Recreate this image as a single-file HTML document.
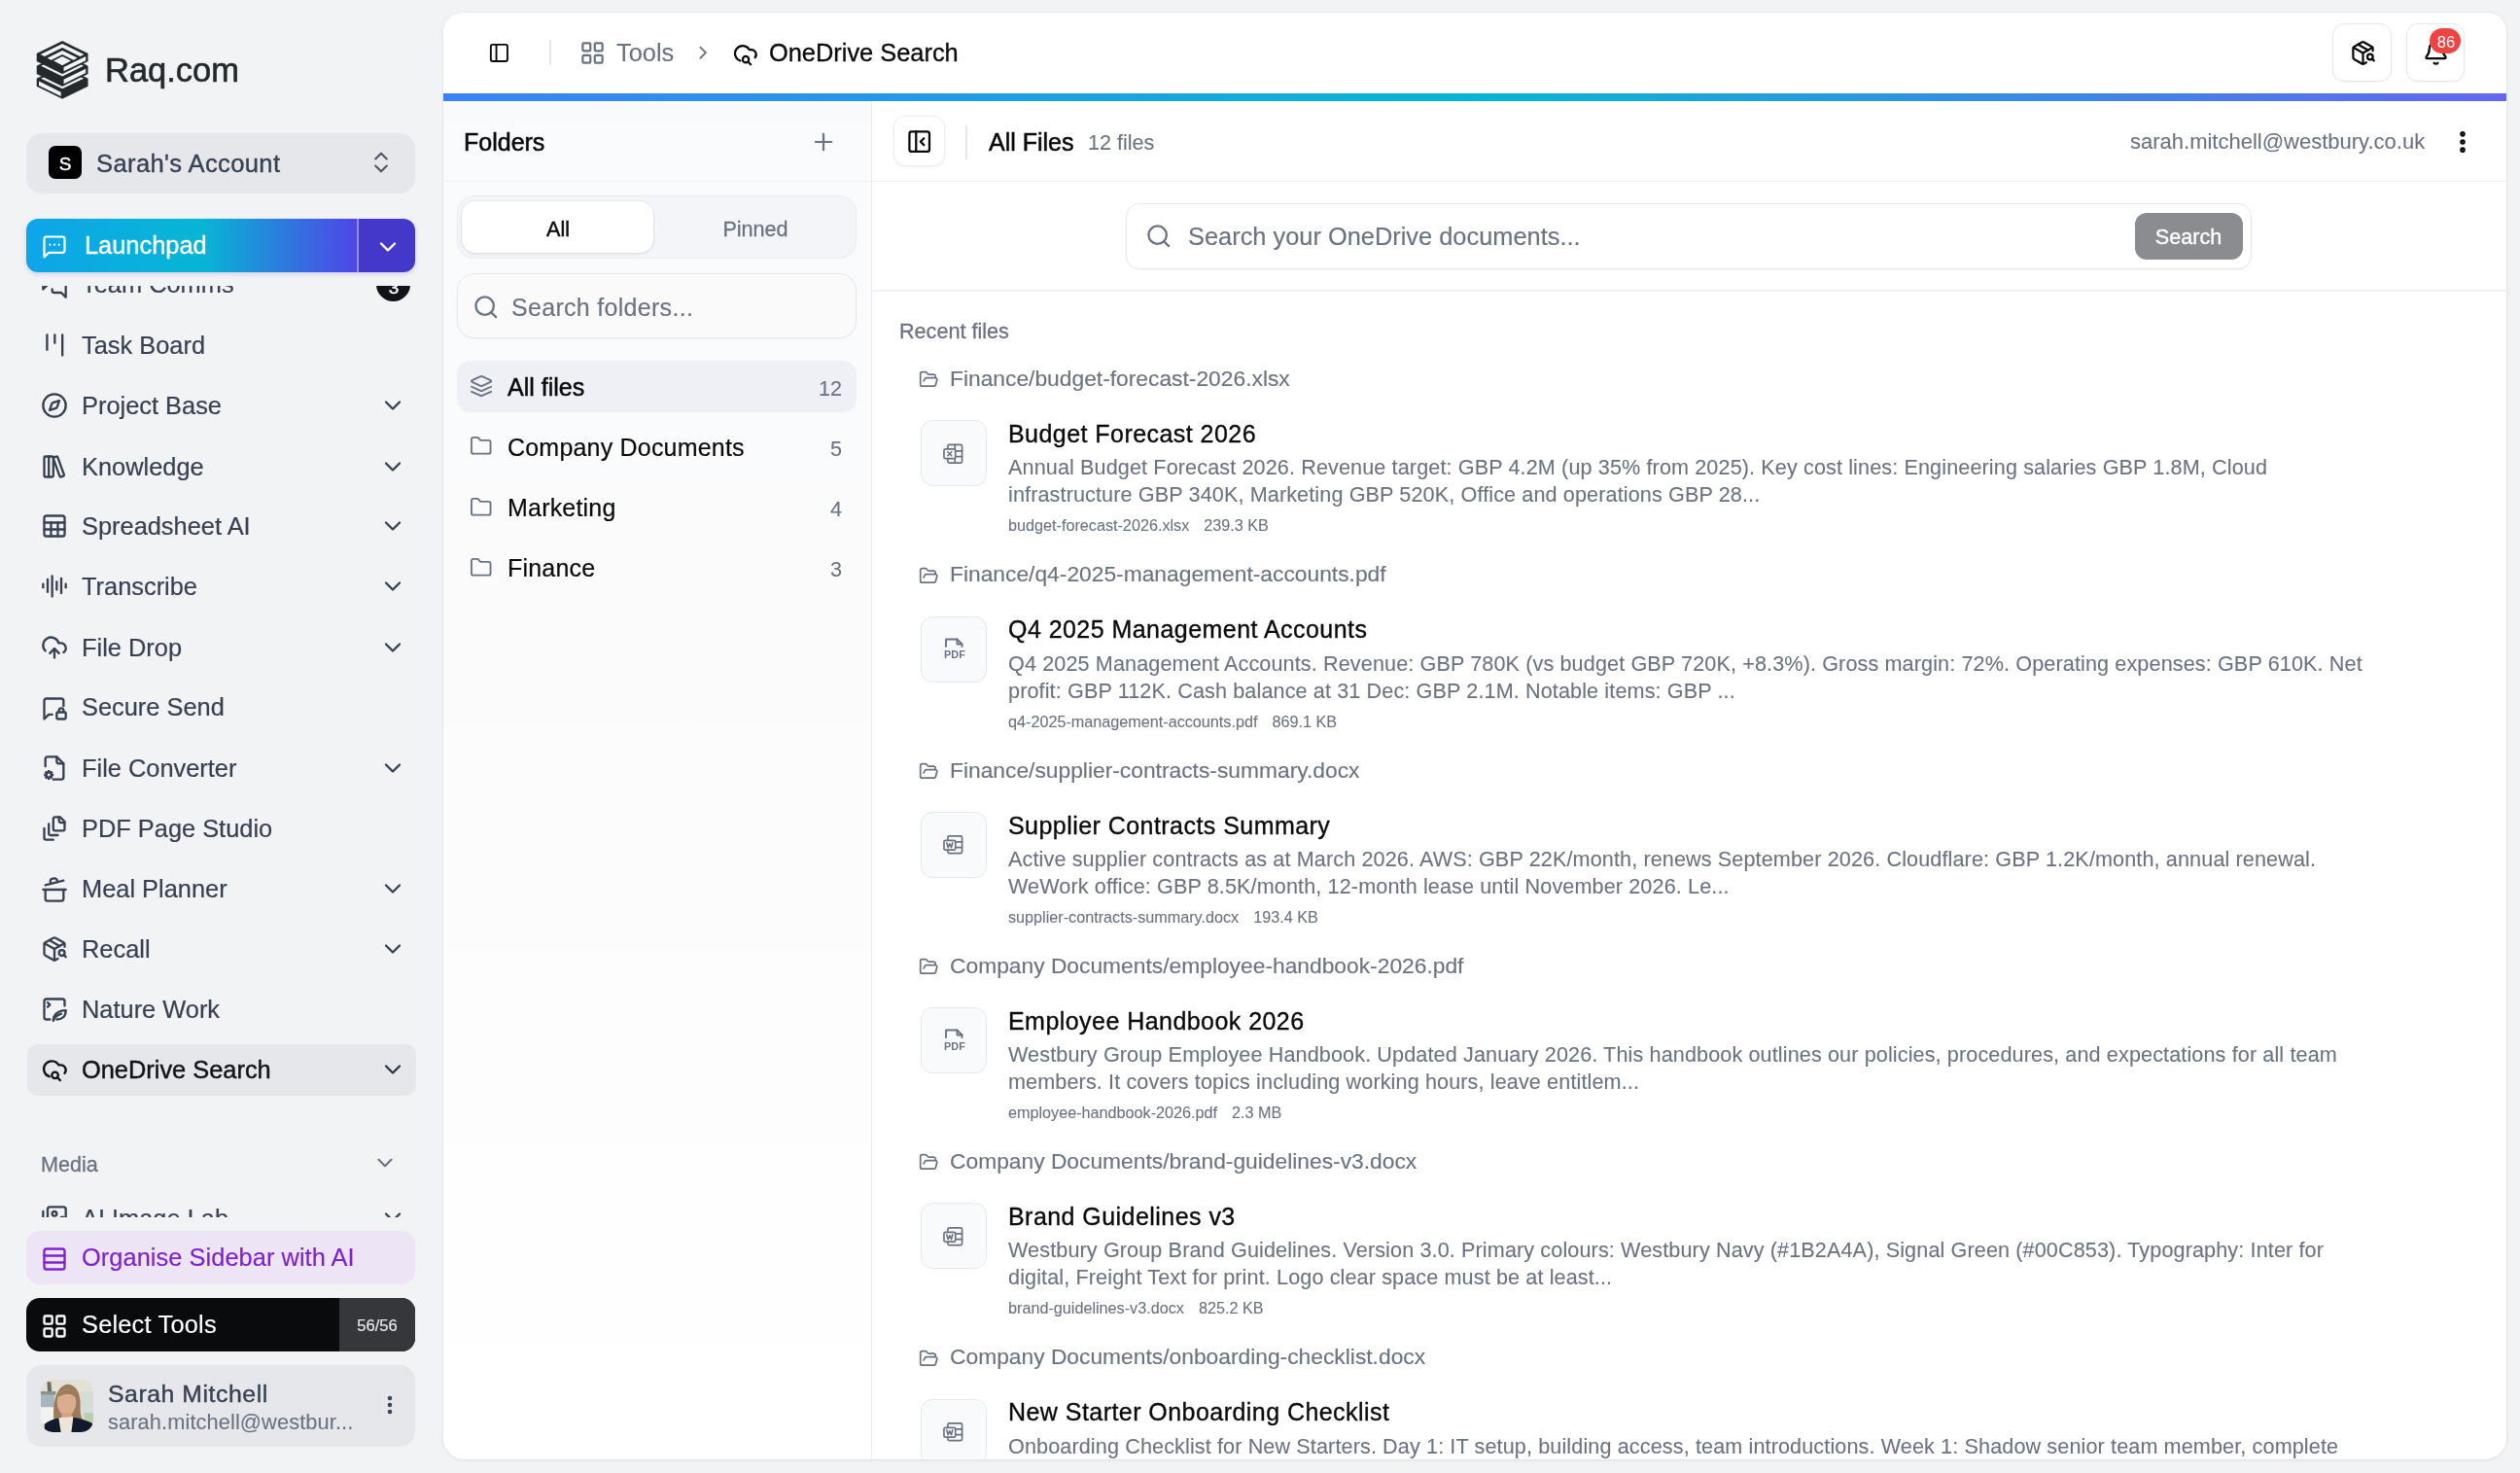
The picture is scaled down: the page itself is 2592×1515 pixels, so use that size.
<!DOCTYPE html>
<html><head><meta charset="utf-8"><title>OneDrive Search</title>
<style>
html,body{margin:0;padding:0;}
body{width:2592px;height:1515px;overflow:hidden;background:#f2f3f5;font-family:"Liberation Sans", sans-serif;position:relative;}
.t{position:absolute;white-space:nowrap;line-height:1;-webkit-font-smoothing:antialiased;will-change:transform;}
body>div,body>svg{}
.b{position:absolute;box-sizing:border-box;}
.ic{position:absolute;overflow:visible;}
</style></head><body>
<svg style="position:absolute;left:30px;top:36px;width:70px;height:70px" viewBox="0 0 1473 1473"><polygon points="718,670 1270,940 1270,1110 718,1380 166,1110 166,940" fill="#25292c" stroke="#25292c" stroke-width="6" stroke-linejoin="round"/><polygon points="718,715 1180,940 718,1165 256,940" fill="#f2f3f5"/><polygon points="211,1002 688,1235 688,1325 211,1092" fill="#f2f3f5"/><polygon points="718,400 1270,670 1270,840 718,1110 166,840 166,670" fill="#25292c" stroke="#25292c" stroke-width="6" stroke-linejoin="round"/><polygon points="718,445 1180,670 718,895 256,670" fill="#f2f3f5"/><polygon points="748,965 1225,732 1225,822 748,1055" fill="#f2f3f5"/><polygon points="718,130 1270,400 1270,570 718,840 166,570 166,400" fill="#25292c" stroke="#25292c" stroke-width="6" stroke-linejoin="round"/><polygon points="748,695 1225,462 1225,552 748,785" fill="#f2f3f5"/><polygon points="245,422 718,188 1190,422 1100,464 718,275 335,464" fill="#f2f3f5"/><polygon points="390,500 718,338 1045,497 960,540 718,420 478,542" fill="#f2f3f5"/><polygon points="530,560 718,465 905,560 718,655" fill="#f2f3f5"/></svg><div class="t " style="left:108px;top:54.79px;font-size:34.5px;color:#25292c;-webkit-text-stroke:0.6px #25292c;">Raq.com</div><div class="b" style="left:27px;top:137px;width:400px;height:62px;background:#e5e7eb;border-radius:16px;"></div><div class="b" style="left:50px;top:150px;width:34px;height:34px;background:#000;border-radius:7px;"></div><div class="t" style="left:-233px;width:600px;text-align:center;top:158.91px;font-size:19px;color:#fff;-webkit-text-stroke:0.4px #fff;">S</div><div class="t " style="left:99px;top:155.52px;font-size:25.6px;color:#374151;-webkit-text-stroke:0.35px #374151;letter-spacing:0.35px;">Sarah's Account</div><svg class="ic" style="left:377.5px;top:152.5px;width:28px;height:28px;color:#4b5563" viewBox="0 0 24 24" fill="none" stroke="currentColor" stroke-width="1.8" stroke-linecap="round" stroke-linejoin="round"><path d="m7 15 5 5 5-5"/><path d="m7 9 5-5 5 5"/></svg><div class="b" style="left:27px;top:225px;width:400px;height:55px;border-radius:12px;overflow:hidden;background:linear-gradient(90deg,#0ea5e9 0%,#06b6d4 45%,#4f46e5 84.9%,#4338ca 85%,#4338ca 100%);box-shadow:0 2px 5px rgba(60,60,160,0.18);"></div><div class="b" style="left:367px;top:225px;width:1.5px;height:55px;background:rgba(220,215,255,0.55);"></div><svg class="ic" style="left:41.5px;top:240px;width:28px;height:28px;color:#fff" viewBox="0 0 24 24" fill="none" stroke="currentColor" stroke-width="1.9" stroke-linecap="round" stroke-linejoin="round"><path d="M21 15a2 2 0 0 1-2 2H7l-4 4V5a2 2 0 0 1 2-2h14a2 2 0 0 1 2 2z"/><path d="M8 10h.01"/><path d="M12 10h.01"/><path d="M16 10h.01"/></svg><div class="t " style="left:87px;top:240.49px;font-size:25.4px;color:#fff;-webkit-text-stroke:0.35px #fff;">Launchpad</div><svg class="ic" style="left:384.5px;top:239.5px;width:28px;height:28px;color:#fff" viewBox="0 0 24 24" fill="none" stroke="currentColor" stroke-width="2" stroke-linecap="round" stroke-linejoin="round"><path d="m6 9 6 6 6-6"/></svg><div style="position:absolute;left:0;top:294px;width:456px;height:958px;overflow:hidden"><div style="position:absolute;left:0;top:-294px;width:456px;height:1515px"><svg class="ic" style="left:42px;top:279.8px;width:28px;height:28px;color:#374151" viewBox="0 0 24 24" fill="none" stroke="currentColor" stroke-width="2" stroke-linecap="round" stroke-linejoin="round"><path d="M14 9a2 2 0 0 1-2 2H6l-4 4V4a2 2 0 0 1 2-2h8a2 2 0 0 1 2 2z"/><path d="M18 9h2a2 2 0 0 1 2 2v11l-4-4h-6a2 2 0 0 1-2-2v-1"/></svg><div class="t " style="left:84px;top:280.49px;font-size:25.4px;color:#374151;-webkit-text-stroke:0.2px #374151;">Team Comms</div><div class="b" style="left:387px;top:275px;width:35px;height:35px;background:#111318;border-radius:50%;"></div><div class="t" style="left:104.5px;width:600px;text-align:center;top:285.91px;font-size:19px;color:#fff;-webkit-text-stroke:0.4px #fff;">3</div><svg class="ic" style="left:42px;top:341px;width:28px;height:28px;color:#374151" viewBox="0 0 24 24" fill="none" stroke="currentColor" stroke-width="2" stroke-linecap="round" stroke-linejoin="round"><path d="M5.5 3v13"/><path d="M12.3 3v7"/><path d="M19 3v18"/></svg><div class="t " style="left:84px;top:343.49px;font-size:25.4px;color:#374151;-webkit-text-stroke:0.2px #374151;">Task Board</div><svg class="ic" style="left:42px;top:403px;width:28px;height:28px;color:#374151" viewBox="0 0 24 24" fill="none" stroke="currentColor" stroke-width="2" stroke-linecap="round" stroke-linejoin="round"><circle cx="12" cy="12" r="10"/><path d="m16.24 7.76-1.804 5.411a2 2 0 0 1-1.265 1.265L7.76 16.24l1.804-5.411a2 2 0 0 1 1.265-1.265z"/></svg><div class="t " style="left:84px;top:405.49px;font-size:25.4px;color:#374151;-webkit-text-stroke:0.2px #374151;">Project Base</div><svg class="ic" style="left:389.5px;top:402.5px;width:28px;height:28px;color:#374151" viewBox="0 0 24 24" fill="none" stroke="currentColor" stroke-width="2" stroke-linecap="round" stroke-linejoin="round"><path d="m6 9 6 6 6-6"/></svg><svg class="ic" style="left:42px;top:466px;width:28px;height:28px;color:#374151" viewBox="0 0 24 24" fill="none" stroke="currentColor" stroke-width="2" stroke-linecap="round" stroke-linejoin="round"><rect x="3" y="3" width="8" height="18" rx="1"/><path d="M7 3v18"/><path d="M20.4 18.9c.2.5-.1 1.1-.6 1.3l-1.9.7c-.5.2-1.1-.1-1.3-.6L11.1 5.1c-.2-.5.1-1.1.6-1.3l1.9-.7c.5-.2 1.1.1 1.3.6Z"/></svg><div class="t " style="left:84px;top:468.49px;font-size:25.4px;color:#374151;-webkit-text-stroke:0.2px #374151;">Knowledge</div><svg class="ic" style="left:389.5px;top:465.5px;width:28px;height:28px;color:#374151" viewBox="0 0 24 24" fill="none" stroke="currentColor" stroke-width="2" stroke-linecap="round" stroke-linejoin="round"><path d="m6 9 6 6 6-6"/></svg><svg class="ic" style="left:42px;top:527px;width:28px;height:28px;color:#374151" viewBox="0 0 24 24" fill="none" stroke="currentColor" stroke-width="2" stroke-linecap="round" stroke-linejoin="round"><rect x="3" y="3" width="18" height="18" rx="2"/><path d="M3 9h18"/><path d="M3 15h18"/><path d="M9 9v12"/><path d="M15 9v12"/></svg><div class="t " style="left:84px;top:529.49px;font-size:25.4px;color:#374151;-webkit-text-stroke:0.2px #374151;">Spreadsheet AI</div><svg class="ic" style="left:389.5px;top:526.5px;width:28px;height:28px;color:#374151" viewBox="0 0 24 24" fill="none" stroke="currentColor" stroke-width="2" stroke-linecap="round" stroke-linejoin="round"><path d="m6 9 6 6 6-6"/></svg><svg class="ic" style="left:42px;top:589px;width:28px;height:28px;color:#374151" viewBox="0 0 24 24" fill="none" stroke="currentColor" stroke-width="2" stroke-linecap="round" stroke-linejoin="round"><path d="M2 10v3"/><path d="M6 6v11"/><path d="M10 3v18"/><path d="M14 8v7"/><path d="M18 5v13"/><path d="M22 10v3"/></svg><div class="t " style="left:84px;top:591.49px;font-size:25.4px;color:#374151;-webkit-text-stroke:0.2px #374151;">Transcribe</div><svg class="ic" style="left:389.5px;top:588.5px;width:28px;height:28px;color:#374151" viewBox="0 0 24 24" fill="none" stroke="currentColor" stroke-width="2" stroke-linecap="round" stroke-linejoin="round"><path d="m6 9 6 6 6-6"/></svg><svg class="ic" style="left:42px;top:652px;width:28px;height:28px;color:#374151" viewBox="0 0 24 24" fill="none" stroke="currentColor" stroke-width="2" stroke-linecap="round" stroke-linejoin="round"><path d="M12 13v8"/><path d="M4 14.899A7 7 0 1 1 15.71 8h1.79a4.5 4.5 0 0 1 2.5 8.242"/><path d="m8 17 4-4 4 4"/></svg><div class="t " style="left:84px;top:654.49px;font-size:25.4px;color:#374151;-webkit-text-stroke:0.2px #374151;">File Drop</div><svg class="ic" style="left:389.5px;top:651.5px;width:28px;height:28px;color:#374151" viewBox="0 0 24 24" fill="none" stroke="currentColor" stroke-width="2" stroke-linecap="round" stroke-linejoin="round"><path d="m6 9 6 6 6-6"/></svg><svg class="ic" style="left:42px;top:715px;width:28px;height:28px;color:#374151" viewBox="0 0 24 24" fill="none" stroke="currentColor" stroke-width="2" stroke-linecap="round" stroke-linejoin="round"><path d="M20 9.5V5a2 2 0 0 0-2-2H5a2 2 0 0 0-2 2v16l4-4h3"/><rect x="14" y="15" width="8" height="6" rx="1"/><path d="M16 15v-1.5a2 2 0 1 1 4 0V15"/></svg><div class="t " style="left:84px;top:715.49px;font-size:25.4px;color:#374151;-webkit-text-stroke:0.2px #374151;">Secure Send</div><svg class="ic" style="left:42px;top:776px;width:28px;height:28px;color:#374151" viewBox="0 0 24 24" fill="none" stroke="currentColor" stroke-width="2" stroke-linecap="round" stroke-linejoin="round"><path d="M4 10.5V4a2 2 0 0 1 2-2h8l6 6v12a2 2 0 0 1-2 2h-7"/><path d="M14 2v4a2 2 0 0 0 2 2h4"/><circle cx="7" cy="18" r="2.3" stroke-width="2.2"/><path d="M10.00 18.00L11.30 18.00M9.12 20.12L10.04 21.04M7.00 21.00L7.00 22.30M4.88 20.12L3.96 21.04M4.00 18.00L2.70 18.00M4.88 15.88L3.96 14.96M7.00 15.00L7.00 13.70M9.12 15.88L10.04 14.96" stroke-width="2" stroke-linecap="butt"/></svg><div class="t " style="left:84px;top:778.49px;font-size:25.4px;color:#374151;-webkit-text-stroke:0.2px #374151;">File Converter</div><svg class="ic" style="left:389.5px;top:775.5px;width:28px;height:28px;color:#374151" viewBox="0 0 24 24" fill="none" stroke="currentColor" stroke-width="2" stroke-linecap="round" stroke-linejoin="round"><path d="m6 9 6 6 6-6"/></svg><svg class="ic" style="left:42px;top:838px;width:28px;height:28px;color:#374151" viewBox="0 0 24 24" fill="none" stroke="currentColor" stroke-width="2" stroke-linecap="round" stroke-linejoin="round"><path d="M21 7h-3a2 2 0 0 1-2-2V2"/><path d="M21 6v6.5c0 .8-.7 1.5-1.5 1.5h-7c-.8 0-1.5-.7-1.5-1.5v-9c0-.8.7-1.5 1.5-1.5H17Z"/><path d="M7 8v8.8c0 .3.2.6.4.8.2.2.5.4.8.4H15"/><path d="M3 12v8.8c0 .3.2.6.4.8.2.2.5.4.8.4H11"/></svg><div class="t " style="left:84px;top:840.49px;font-size:25.4px;color:#374151;-webkit-text-stroke:0.2px #374151;">PDF Page Studio</div><svg class="ic" style="left:42px;top:901px;width:28px;height:28px;color:#374151" viewBox="0 0 24 24" fill="none" stroke="currentColor" stroke-width="2" stroke-linecap="round" stroke-linejoin="round"><path d="M2 12h20"/><path d="M20 12v8a2 2 0 0 1-2 2H6a2 2 0 0 1-2-2v-8"/><path d="m4 8 16-4"/><path d="m8.86 6.78-.45-1.81a2 2 0 0 1 1.45-2.43l1.94-.48a2 2 0 0 1 2.43 1.46l.45 1.8"/></svg><div class="t " style="left:84px;top:902.49px;font-size:25.4px;color:#374151;-webkit-text-stroke:0.2px #374151;">Meal Planner</div><svg class="ic" style="left:389.5px;top:899.5px;width:28px;height:28px;color:#374151" viewBox="0 0 24 24" fill="none" stroke="currentColor" stroke-width="2" stroke-linecap="round" stroke-linejoin="round"><path d="m6 9 6 6 6-6"/></svg><svg class="ic" style="left:42px;top:962px;width:28px;height:28px;color:#374151" viewBox="0 0 24 24" fill="none" stroke="currentColor" stroke-width="2" stroke-linecap="round" stroke-linejoin="round"><path d="M21 10V8a2 2 0 0 0-1-1.73l-7-4a2 2 0 0 0-2 0l-7 4A2 2 0 0 0 3 8v8a2 2 0 0 0 1 1.73l7 4a2 2 0 0 0 2 0l2-1.14"/><path d="m7.5 4.27 9 5.15"/><path d="M3.29 7 12 12l8.71-5"/><path d="M12 22V12"/><circle cx="18.5" cy="15.5" r="2.5"/><path d="M20.27 17.27 22 19"/></svg><div class="t " style="left:84px;top:964.49px;font-size:25.4px;color:#374151;-webkit-text-stroke:0.2px #374151;">Recall</div><svg class="ic" style="left:389.5px;top:961.5px;width:28px;height:28px;color:#374151" viewBox="0 0 24 24" fill="none" stroke="currentColor" stroke-width="2" stroke-linecap="round" stroke-linejoin="round"><path d="m6 9 6 6 6-6"/></svg><svg class="ic" style="left:42px;top:1024px;width:28px;height:28px;color:#374151" viewBox="0 0 24 24" fill="none" stroke="currentColor" stroke-width="2" stroke-linecap="round" stroke-linejoin="round"><path d="M21 9V5a2 2 0 0 0-2-2H5a2 2 0 0 0-2 2v14a2 2 0 0 0 2 2h3"/><path d="m6 6 2 2-2 2"/><path d="M11 22c0-4 3-9 11-9 0 6-4 8-8 8"/><path d="M11 22c1-3 4-5 7-6"/></svg><div class="t " style="left:84px;top:1026.49px;font-size:25.4px;color:#374151;-webkit-text-stroke:0.2px #374151;">Nature Work</div><div class="b" style="left:28px;top:1073.5px;width:400px;height:53.299999999999955px;background:#e5e7eb;border-radius:11px;"></div><svg class="ic" style="left:42px;top:1086px;width:28px;height:28px;color:#111318" viewBox="0 0 24 24" fill="none" stroke="currentColor" stroke-width="2" stroke-linecap="round" stroke-linejoin="round"><path d="M7.5 18.2A7 7 0 1 1 15.71 8h1.79a4.5 4.5 0 0 1 3.5 7.3"/><circle cx="12.5" cy="17" r="2.8"/><path d="m14.6 19.1 2.4 2.4"/></svg><div class="t " style="left:84px;top:1088.49px;font-size:25.4px;color:#111318;-webkit-text-stroke:0.45px #111318;">OneDrive Search</div><svg class="ic" style="left:389.5px;top:1085.5px;width:28px;height:28px;color:#2f3542" viewBox="0 0 24 24" fill="none" stroke="currentColor" stroke-width="2" stroke-linecap="round" stroke-linejoin="round"><path d="m6 9 6 6 6-6"/></svg><svg class="ic" style="left:42px;top:1238.5px;width:28px;height:28px;color:#374151" viewBox="0 0 24 24" fill="none" stroke="currentColor" stroke-width="2" stroke-linecap="round" stroke-linejoin="round"><path d="M18 22H4a2 2 0 0 1-2-2V6"/><path d="m22 13-1.296-1.296a2.41 2.41 0 0 0-3.408 0L11 18"/><circle cx="12" cy="8" r="2"/><rect width="16" height="16" x="6" y="2" rx="2"/></svg><div class="t " style="left:84px;top:1240.99px;font-size:25.4px;color:#374151;-webkit-text-stroke:0.2px #374151;">AI Image Lab</div><svg class="ic" style="left:389.5px;top:1238.0px;width:28px;height:28px;color:#374151" viewBox="0 0 24 24" fill="none" stroke="currentColor" stroke-width="2" stroke-linecap="round" stroke-linejoin="round"><path d="m6 9 6 6 6-6"/></svg><div class="t " style="left:42px;top:1186.71px;font-size:21.6px;color:#6b7280;-webkit-text-stroke:0.3px #6b7280;">Media</div><svg class="ic" style="left:383px;top:1183px;width:26px;height:26px;color:#6b7280" viewBox="0 0 24 24" fill="none" stroke="currentColor" stroke-width="2" stroke-linecap="round" stroke-linejoin="round"><path d="m6 9 6 6 6-6"/></svg></div></div><div class="b" style="left:27px;top:1266px;width:400px;height:55px;background:#ede4f6;border-radius:14px;"></div><svg class="ic" style="left:41.5px;top:1280.5px;width:28px;height:28px;color:#7e22ce" viewBox="0 0 24 24" fill="none" stroke="currentColor" stroke-width="2" stroke-linecap="round" stroke-linejoin="round"><rect x="3" y="3" width="18" height="18" rx="2"/><path d="M21 9H3"/><path d="M21 15H3"/></svg><div class="t " style="left:84px;top:1281.49px;font-size:25.4px;color:#7e22ce;-webkit-text-stroke:0.15px #7e22ce;letter-spacing:0.05px;">Organise Sidebar with AI</div><div class="b" style="left:27px;top:1335px;width:400px;height:55px;background:#0a0b0d;border-radius:14px;overflow:hidden;"></div><div class="b" style="left:348.5px;top:1335px;width:78.5px;height:55px;background:#36373b;border-radius:0 14px 14px 0;"></div><svg class="ic" style="left:41.5px;top:1349.5px;width:28px;height:28px;color:#fff" viewBox="0 0 24 24" fill="none" stroke="currentColor" stroke-width="2" stroke-linecap="round" stroke-linejoin="round"><rect x="3" y="3" width="7" height="7" rx="1"/><rect x="14" y="3" width="7" height="7" rx="1"/><rect x="14" y="14" width="7" height="7" rx="1"/><rect x="3" y="14" width="7" height="7" rx="1"/></svg><div class="t " style="left:84px;top:1350.09px;font-size:25.4px;color:#fff;-webkit-text-stroke:0.15px #fff;letter-spacing:0.2px;">Select Tools</div><div class="t" style="left:88px;width:600px;text-align:center;top:1355.03px;font-size:16.5px;color:#e5e7eb;-webkit-text-stroke:0.2px #e5e7eb;">56/56</div><div class="b" style="left:27px;top:1404px;width:400px;height:84px;background:#e5e7eb;border-radius:16px;"></div><svg style="position:absolute;left:38px;top:1415px;width:62px;height:62px" viewBox="0 0 1473 1473">
<defs><clipPath id="av"><rect x="95" y="95" width="1280" height="1280" rx="290"/></clipPath></defs>
<g clip-path="url(#av)">
<rect x="0" y="0" width="1473" height="1473" fill="#e3e1d6"/>
<rect x="0" y="380" width="460" height="90" fill="#8c928c"/>
<rect x="0" y="470" width="430" height="300" fill="#a7b6be"/>
<rect x="0" y="770" width="420" height="400" fill="#f1f3f1"/>
<rect x="1000" y="380" width="473" height="600" fill="#d6dcd6"/>
<rect x="1150" y="900" width="323" height="250" fill="#b9cfae"/>
<path d="M250 150 L340 150 L360 380 L260 380 Z" fill="#6d6a60"/>
<path d="M420 1120 C380 800 420 300 720 210 C1000 200 1080 500 1060 800 C1050 950 1100 1050 1150 1100 L800 1150 Z" fill="#9b7b5b"/>
<ellipse cx="725" cy="650" rx="235" ry="320" fill="#d9ad8d"/>
<path d="M520 520 C560 360 700 330 760 340 C900 350 960 430 960 560 C900 430 700 400 520 520Z" fill="#9b7b5b"/>
<rect x="600" y="900" width="250" height="220" fill="#d3a383"/>
<path d="M185 1473 L185 1180 C300 1090 420 1060 540 1030 L700 1473 Z" fill="#111a2b"/>
<path d="M880 1010 C1050 1050 1250 1100 1350 1160 L1473 1473 L800 1473 Z" fill="#111a2b"/>
<path d="M530 1030 L890 1000 L830 1473 L600 1473 Z" fill="#eee5da"/>
</g></svg><div class="t " style="left:111px;top:1422.00px;font-size:24.8px;color:#374151;-webkit-text-stroke:0.4px #374151;letter-spacing:0.55px;">Sarah Mitchell</div><div class="t " style="left:111px;top:1451.54px;font-size:21.8px;color:#6b7280;-webkit-text-stroke:0.1px #6b7280;letter-spacing:0.1px;">sarah.mitchell@westbur...</div><svg class="ic" style="left:389px;top:1433px;width:24px;height:24px;color:#374151" viewBox="0 0 24 24" fill="none" stroke="currentColor" stroke-width="2.6" stroke-linecap="round" stroke-linejoin="round"><circle cx="12" cy="12" r="1"/><circle cx="12" cy="5" r="1"/><circle cx="12" cy="19" r="1"/></svg><div class="b" style="left:456px;top:13px;width:2122px;height:1488px;background:#fff;border-radius:20px 20px 22px 22px;overflow:hidden;box-shadow:0 1px 4px rgba(0,0,0,0.07),0 0 0 1px rgba(0,0,0,0.02)"><div style="position:absolute;left:-456px;top:-13px;width:2592px;height:1515px"><svg class="ic" style="left:501.6px;top:42.6px;width:22.8px;height:22.8px;color:#0a0a0a" viewBox="0 0 24 24" fill="none" stroke="currentColor" stroke-width="2" stroke-linecap="round" stroke-linejoin="round"><rect x="3" y="3" width="18" height="18" rx="2"/><path d="M9 3v18"/></svg><div class="b" style="left:565px;top:41px;width:1.5px;height:26px;background:#e5e7eb;"></div><svg class="ic" style="left:595.5px;top:40.8px;width:27px;height:27px;color:#6b7280" viewBox="0 0 24 24" fill="none" stroke="currentColor" stroke-width="2" stroke-linecap="round" stroke-linejoin="round"><rect x="3" y="3" width="7" height="7" rx="1"/><rect x="14" y="3" width="7" height="7" rx="1"/><rect x="14" y="14" width="7" height="7" rx="1"/><rect x="3" y="14" width="7" height="7" rx="1"/></svg><div class="t " style="left:633.6px;top:42.49px;font-size:25.4px;color:#6b7280;-webkit-text-stroke:0.15px #6b7280;">Tools</div><svg class="ic" style="left:712.3px;top:43.3px;width:22.3px;height:22.3px;color:#6b7280" viewBox="0 0 24 24" fill="none" stroke="currentColor" stroke-width="2" stroke-linecap="round" stroke-linejoin="round"><path d="m9 18 6-6-6-6"/></svg><svg class="ic" style="left:753px;top:42px;width:27px;height:27px;color:#0a0a0a" viewBox="0 0 24 24" fill="none" stroke="currentColor" stroke-width="2" stroke-linecap="round" stroke-linejoin="round"><path d="M7.5 18.2A7 7 0 1 1 15.71 8h1.79a4.5 4.5 0 0 1 3.5 7.3"/><circle cx="12.5" cy="17" r="2.8"/><path d="m14.6 19.1 2.4 2.4"/></svg><div class="t " style="left:791.4px;top:42.49px;font-size:25.4px;color:#0a0a0a;-webkit-text-stroke:0.3px #0a0a0a;">OneDrive Search</div><div class="b" style="left:2399px;top:24px;width:61px;height:60px;border:1.5px solid #e5e7eb;border-radius:12px;background:#fff;box-shadow:0 1px 2px rgba(0,0,0,0.04);"></div><svg class="ic" style="left:2416.5px;top:40.5px;width:27px;height:27px;color:#0a0a0a" viewBox="0 0 24 24" fill="none" stroke="currentColor" stroke-width="2" stroke-linecap="round" stroke-linejoin="round"><path d="M21 10V8a2 2 0 0 0-1-1.73l-7-4a2 2 0 0 0-2 0l-7 4A2 2 0 0 0 3 8v8a2 2 0 0 0 1 1.73l7 4a2 2 0 0 0 2 0l2-1.14"/><path d="m7.5 4.27 9 5.15"/><path d="M3.29 7 12 12l8.71-5"/><path d="M12 22V12"/><circle cx="18.5" cy="15.5" r="2.5"/><path d="M20.27 17.27 22 19"/></svg><div class="b" style="left:2475px;top:24px;width:60px;height:60px;border:1.5px solid #e5e7eb;border-radius:12px;background:#fff;box-shadow:0 1px 2px rgba(0,0,0,0.04);"></div><svg class="ic" style="left:2491.8px;top:41px;width:27px;height:27px;color:#0a0a0a" viewBox="0 0 24 24" fill="none" stroke="currentColor" stroke-width="2" stroke-linecap="round" stroke-linejoin="round"><path d="M10.268 21a2 2 0 0 0 3.464 0"/><path d="M3.262 15.326A1 1 0 0 0 4 17h16a1 1 0 0 0 .74-1.673C19.41 13.956 18 12.499 18 8A6 6 0 0 0 6 8c0 4.499-1.411 5.956-2.738 7.326"/></svg><div class="b" style="left:2499px;top:29px;width:32px;height:26px;background:#ef4444;border-radius:13px;"></div><div class="t" style="left:2215.5px;width:600px;text-align:center;top:35.03px;font-size:16.5px;color:#fff;">86</div><div class="b" style="left:456px;top:96px;width:2122px;height:7.700000000000003px;background:linear-gradient(90deg,#3b82f6 0%,#06b6d4 50%,#6366f1 100%);"></div><div class="b" style="left:456px;top:103.7px;width:440px;height:1411.3px;background:linear-gradient(180deg,#f9fafb 0%,#fcfcfd 50%,#ffffff 100%);"></div><div class="b" style="left:895.5px;top:103.7px;width:1.5px;height:1411.3px;background:#e9ebef;"></div><div class="b" style="left:456px;top:185.6px;width:440px;height:1.4000000000000057px;background:#eef0f3;"></div><div class="t " style="left:477px;top:134.43px;font-size:25px;color:#0a0a0a;-webkit-text-stroke:0.55px #0a0a0a;">Folders</div><svg class="ic" style="left:833.3px;top:132.2px;width:28px;height:28px;color:#6b7280" viewBox="0 0 24 24" fill="none" stroke="currentColor" stroke-width="1.9" stroke-linecap="round" stroke-linejoin="round"><path d="M5 12h14"/><path d="M12 5v14"/></svg><div class="b" style="left:470px;top:201px;width:411px;height:65px;background:#f4f5f8;border:1.5px solid #e8eaef;border-radius:18px;"></div><div class="b" style="left:474.5px;top:207px;width:197.5px;height:53px;background:#fff;border-radius:14px;box-shadow:0 1px 3px rgba(0,0,0,0.10),0 0 0 1px rgba(0,0,0,0.03);"></div><div class="t" style="left:273.6px;width:600px;text-align:center;top:224.71px;font-size:21.6px;color:#0a0a0a;-webkit-text-stroke:0.45px #0a0a0a;">All</div><div class="t" style="left:476.5px;width:600px;text-align:center;top:224.71px;font-size:21.6px;color:#6b7280;-webkit-text-stroke:0.3px #6b7280;">Pinned</div><div class="b" style="left:470px;top:281px;width:411px;height:67px;background:#fafafb;border:1.5px solid #e6e8ec;border-radius:18px;box-shadow:0 1px 2px rgba(0,0,0,0.04);"></div><svg class="ic" style="left:485.6px;top:301.6px;width:27.6px;height:27.6px;color:#6b7280" viewBox="0 0 24 24" fill="none" stroke="currentColor" stroke-width="2" stroke-linecap="round" stroke-linejoin="round"><circle cx="11" cy="11" r="8"/><path d="m21 21-4.3-4.3"/></svg><div class="t " style="left:526.4px;top:303.83px;font-size:25px;color:#6b7280;-webkit-text-stroke:0.15px #6b7280;letter-spacing:0.3px;">Search folders...</div><div class="b" style="left:470px;top:371px;width:411px;height:53px;background:#eff0f5;border-radius:14px;"></div><svg class="ic" style="left:482.6px;top:385.2px;width:24.2px;height:24.2px;color:#6b7280" viewBox="0 0 24 24" fill="none" stroke="currentColor" stroke-width="1.9" stroke-linecap="round" stroke-linejoin="round"><path d="m12.83 2.18a2 2 0 0 0-1.66 0L2.6 6.08a1 1 0 0 0 0 1.83l8.58 3.91a2 2 0 0 0 1.66 0l8.58-3.9a1 1 0 0 0 0-1.83Z"/><path d="m22 17.65-9.17 4.16a2 2 0 0 1-1.66 0L2 17.65"/><path d="m22 12.65-9.17 4.16a2 2 0 0 1-1.66 0L2 12.65"/></svg><div class="t " style="left:522px;top:386.43px;font-size:25px;color:#0a0a0a;-webkit-text-stroke:0.5px #0a0a0a;">All files</div><div class="t" style="right:1726px;top:389.31px;font-size:21.6px;color:#6b7280;-webkit-text-stroke:0.1px #6b7280;">12</div><svg class="ic" style="left:483px;top:447.4px;width:23.5px;height:23.5px;color:#6b7280" viewBox="0 0 24 24" fill="none" stroke="currentColor" stroke-width="1.9" stroke-linecap="round" stroke-linejoin="round"><path d="M20 20a2 2 0 0 0 2-2V8a2 2 0 0 0-2-2h-7.9a2 2 0 0 1-1.69-.9L9.6 3.9A2 2 0 0 0 7.93 3H4a2 2 0 0 0-2 2v13a2 2 0 0 0 2 2Z"/></svg><div class="t " style="left:522px;top:447.83px;font-size:25px;color:#0a0a0a;-webkit-text-stroke:0.2px #0a0a0a;letter-spacing:0.2px;">Company Documents</div><div class="t" style="right:1726px;top:450.71px;font-size:21.6px;color:#6b7280;-webkit-text-stroke:0.1px #6b7280;">5</div><svg class="ic" style="left:483px;top:509.6px;width:23.5px;height:23.5px;color:#6b7280" viewBox="0 0 24 24" fill="none" stroke="currentColor" stroke-width="1.9" stroke-linecap="round" stroke-linejoin="round"><path d="M20 20a2 2 0 0 0 2-2V8a2 2 0 0 0-2-2h-7.9a2 2 0 0 1-1.69-.9L9.6 3.9A2 2 0 0 0 7.93 3H4a2 2 0 0 0-2 2v13a2 2 0 0 0 2 2Z"/></svg><div class="t " style="left:522px;top:510.03px;font-size:25px;color:#0a0a0a;-webkit-text-stroke:0.2px #0a0a0a;letter-spacing:0.2px;">Marketing</div><div class="t" style="right:1726px;top:512.91px;font-size:21.6px;color:#6b7280;-webkit-text-stroke:0.1px #6b7280;">4</div><svg class="ic" style="left:483px;top:571.8px;width:23.5px;height:23.5px;color:#6b7280" viewBox="0 0 24 24" fill="none" stroke="currentColor" stroke-width="1.9" stroke-linecap="round" stroke-linejoin="round"><path d="M20 20a2 2 0 0 0 2-2V8a2 2 0 0 0-2-2h-7.9a2 2 0 0 1-1.69-.9L9.6 3.9A2 2 0 0 0 7.93 3H4a2 2 0 0 0-2 2v13a2 2 0 0 0 2 2Z"/></svg><div class="t " style="left:522px;top:572.23px;font-size:25px;color:#0a0a0a;-webkit-text-stroke:0.2px #0a0a0a;letter-spacing:0.2px;">Finance</div><div class="t" style="right:1726px;top:575.11px;font-size:21.6px;color:#6b7280;-webkit-text-stroke:0.1px #6b7280;">3</div><div class="b" style="left:897px;top:185.6px;width:1681px;height:1.4000000000000057px;background:#eef0f3;"></div><div class="b" style="left:919px;top:119.4px;width:53px;height:52.0px;background:#fff;border:1.5px solid #eceef2;border-radius:12px;box-shadow:0 1px 3px rgba(0,0,0,0.06);"></div><svg class="ic" style="left:932.2px;top:132.2px;width:27.4px;height:27.4px;color:#0a0a0a" viewBox="0 0 24 24" fill="none" stroke="currentColor" stroke-width="2" stroke-linecap="round" stroke-linejoin="round"><rect x="3" y="3" width="18" height="18" rx="2"/><path d="M9 3v18"/><path d="m16 15-3-3 3-3"/></svg><div class="b" style="left:993px;top:129px;width:1.5px;height:35px;background:#e5e7eb;"></div><div class="t " style="left:1016.6px;top:134.43px;font-size:25px;color:#0a0a0a;-webkit-text-stroke:0.55px #0a0a0a;">All Files</div><div class="t " style="left:1119px;top:135.71px;font-size:21.6px;color:#6b7280;-webkit-text-stroke:0.1px #6b7280;">12 files</div><div class="t" style="right:98px;top:135.37px;font-size:22px;color:#6b7280;-webkit-text-stroke:0.1px #6b7280;">sarah.mitchell@westbury.co.uk</div><svg class="ic" style="left:2519px;top:131.6px;width:28px;height:28px;color:#0a0a0a" viewBox="0 0 24 24" fill="none" stroke="currentColor" stroke-width="2.8" stroke-linecap="round" stroke-linejoin="round"><circle cx="12" cy="12" r="1"/><circle cx="12" cy="5" r="1"/><circle cx="12" cy="19" r="1"/></svg><div class="b" style="left:897px;top:298.3px;width:1681px;height:1.5px;background:#eef0f3;"></div><div class="b" style="left:1158px;top:209px;width:1158px;height:67.5px;background:#fff;border:1.5px solid #e5e7eb;border-radius:14px;box-shadow:0 1px 2px rgba(0,0,0,0.04);"></div><svg class="ic" style="left:1178.2px;top:229.4px;width:27.6px;height:27.6px;color:#6b7280" viewBox="0 0 24 24" fill="none" stroke="currentColor" stroke-width="2" stroke-linecap="round" stroke-linejoin="round"><circle cx="11" cy="11" r="8"/><path d="m21 21-4.3-4.3"/></svg><div class="t " style="left:1222px;top:231.49px;font-size:25.4px;color:#6b7280;-webkit-text-stroke:0.15px #6b7280;">Search your OneDrive documents...</div><div class="b" style="left:2196px;top:219px;width:110.5px;height:47.5px;background:#8b8c8f;border-radius:12px;"></div><div class="t" style="left:1951px;width:600px;text-align:center;top:233.31px;font-size:21.6px;color:#fff;-webkit-text-stroke:0.35px #fff;">Search</div><div class="t " style="left:925px;top:330.31px;font-size:21.6px;color:#6b7280;-webkit-text-stroke:0.3px #6b7280;">Recent files</div><svg class="ic" style="left:944.7px;top:380.3px;width:20.5px;height:20.5px;color:#6b7280" viewBox="0 0 24 24" fill="none" stroke="currentColor" stroke-width="2" stroke-linecap="round" stroke-linejoin="round"><path d="m6 14 1.5-2.9A2 2 0 0 1 9.24 10H20a2 2 0 0 1 1.94 2.5l-1.54 6a2 2 0 0 1-1.95 1.5H4a2 2 0 0 1-2-2V5a2 2 0 0 1 2-2h3.9a2 2 0 0 1 1.69.9l.81 1.2a2 2 0 0 0 1.67.9H18a2 2 0 0 1 2 2v2"/></svg><div class="t " style="left:977px;top:378.10px;font-size:22.8px;color:#6b7280;-webkit-text-stroke:0.15px #6b7280;">Finance/budget-forecast-2026.xlsx</div><div class="b" style="left:947px;top:432.4px;width:68px;height:68.0px;background:#f9fafb;border:1.5px solid #e6e8ec;border-radius:12px;"></div><svg class="ic" style="left:968.5px;top:454.9px;width:23.5px;height:23.5px;color:#6b7280" viewBox="0 0 24 24" fill="none" stroke="currentColor" stroke-width="1.7" stroke-linecap="round" stroke-linejoin="round"><rect x="6" y="2.5" width="15" height="19" rx="1.5"/><path d="M13.5 2.5v19"/><path d="M13.5 9h7.5M13.5 15h7.5"/><rect x="2" y="7" width="12" height="10" rx="1.5" fill="#f9fafb"/><path d="m6 10 4 4M10 10l-4 4" stroke-width="1.6"/></svg><div class="t " style="left:1037px;top:434.03px;font-size:25px;color:#0a0a0a;-webkit-text-stroke:0.35px #0a0a0a;letter-spacing:0.45px;">Budget Forecast 2026</div><div class="t " style="left:1037px;top:470.31px;font-size:21.6px;color:#6b7280;-webkit-text-stroke:0.1px #6b7280;letter-spacing:0.12px;">Annual Budget Forecast 2026. Revenue target: GBP 4.2M (up 35% from 2025). Key cost lines: Engineering salaries GBP 1.8M, Cloud</div><div class="t " style="left:1037px;top:498.31px;font-size:21.6px;color:#6b7280;-webkit-text-stroke:0.1px #6b7280;letter-spacing:0.12px;">infrastructure GBP 340K, Marketing GBP 520K, Office and operations GBP 28...</div><div class="t " style="left:1037px;top:532.28px;font-size:16.2px;color:#6b7280;-webkit-text-stroke:0.1px #6b7280;">budget-forecast-2026.xlsx<span style="margin-left:15px">239.3 KB</span></div><svg class="ic" style="left:944.7px;top:581.54px;width:20.5px;height:20.5px;color:#6b7280" viewBox="0 0 24 24" fill="none" stroke="currentColor" stroke-width="2" stroke-linecap="round" stroke-linejoin="round"><path d="m6 14 1.5-2.9A2 2 0 0 1 9.24 10H20a2 2 0 0 1 1.94 2.5l-1.54 6a2 2 0 0 1-1.95 1.5H4a2 2 0 0 1-2-2V5a2 2 0 0 1 2-2h3.9a2 2 0 0 1 1.69.9l.81 1.2a2 2 0 0 0 1.67.9H18a2 2 0 0 1 2 2v2"/></svg><div class="t " style="left:977px;top:579.34px;font-size:22.8px;color:#6b7280;-webkit-text-stroke:0.15px #6b7280;">Finance/q4-2025-management-accounts.pdf</div><div class="b" style="left:947px;top:633.64px;width:68px;height:68.0px;background:#f9fafb;border:1.5px solid #e6e8ec;border-radius:12px;"></div><svg class="ic" style="left:968.8px;top:654.64px;width:30px;height:26px" viewBox="0 0 30 26" fill="none" stroke="#6b7280" stroke-width="1.9" stroke-linecap="round" stroke-linejoin="round"><path d="M4 10V2.5h11.5L20.5 7.5V10"/><path d="M15.5 2.5v5h5"/></svg><div class="t" style="left:960px;top:668.14px;width:44px;text-align:center;font-size:10.8px;color:#6b7280;font-weight:bold;letter-spacing:0.1px">PDF</div><div class="t " style="left:1037px;top:635.27px;font-size:25px;color:#0a0a0a;-webkit-text-stroke:0.35px #0a0a0a;letter-spacing:0.45px;">Q4 2025 Management Accounts</div><div class="t " style="left:1037px;top:671.55px;font-size:21.6px;color:#6b7280;-webkit-text-stroke:0.1px #6b7280;letter-spacing:0.12px;">Q4 2025 Management Accounts. Revenue: GBP 780K (vs budget GBP 720K, +8.3%). Gross margin: 72%. Operating expenses: GBP 610K. Net</div><div class="t " style="left:1037px;top:699.55px;font-size:21.6px;color:#6b7280;-webkit-text-stroke:0.1px #6b7280;letter-spacing:0.12px;">profit: GBP 112K. Cash balance at 31 Dec: GBP 2.1M. Notable items: GBP ...</div><div class="t " style="left:1037px;top:733.52px;font-size:16.2px;color:#6b7280;-webkit-text-stroke:0.1px #6b7280;">q4-2025-management-accounts.pdf<span style="margin-left:15px">869.1 KB</span></div><svg class="ic" style="left:944.7px;top:782.78px;width:20.5px;height:20.5px;color:#6b7280" viewBox="0 0 24 24" fill="none" stroke="currentColor" stroke-width="2" stroke-linecap="round" stroke-linejoin="round"><path d="m6 14 1.5-2.9A2 2 0 0 1 9.24 10H20a2 2 0 0 1 1.94 2.5l-1.54 6a2 2 0 0 1-1.95 1.5H4a2 2 0 0 1-2-2V5a2 2 0 0 1 2-2h3.9a2 2 0 0 1 1.69.9l.81 1.2a2 2 0 0 0 1.67.9H18a2 2 0 0 1 2 2v2"/></svg><div class="t " style="left:977px;top:780.58px;font-size:22.8px;color:#6b7280;-webkit-text-stroke:0.15px #6b7280;">Finance/supplier-contracts-summary.docx</div><div class="b" style="left:947px;top:834.88px;width:68px;height:68.0px;background:#f9fafb;border:1.5px solid #e6e8ec;border-radius:12px;"></div><svg class="ic" style="left:968.5px;top:857.38px;width:23.5px;height:23.5px;color:#6b7280" viewBox="0 0 24 24" fill="none" stroke="currentColor" stroke-width="1.7" stroke-linecap="round" stroke-linejoin="round"><rect x="6" y="3" width="15" height="18" rx="1.5"/><path d="M14 9h7M14 15h7"/><rect x="2" y="7.5" width="12" height="10" rx="1.5" fill="#f9fafb"/><path d="m5 10 1.3 5 1.7-4 1.7 4L11 10" stroke-width="1.6"/></svg><div class="t " style="left:1037px;top:836.51px;font-size:25px;color:#0a0a0a;-webkit-text-stroke:0.35px #0a0a0a;letter-spacing:0.45px;">Supplier Contracts Summary</div><div class="t " style="left:1037px;top:872.79px;font-size:21.6px;color:#6b7280;-webkit-text-stroke:0.1px #6b7280;letter-spacing:0.12px;">Active supplier contracts as at March 2026. AWS: GBP 22K/month, renews September 2026. Cloudflare: GBP 1.2K/month, annual renewal.</div><div class="t " style="left:1037px;top:900.79px;font-size:21.6px;color:#6b7280;-webkit-text-stroke:0.1px #6b7280;letter-spacing:0.12px;">WeWork office: GBP 8.5K/month, 12-month lease until November 2026. Le...</div><div class="t " style="left:1037px;top:934.76px;font-size:16.2px;color:#6b7280;-webkit-text-stroke:0.1px #6b7280;">supplier-contracts-summary.docx<span style="margin-left:15px">193.4 KB</span></div><svg class="ic" style="left:944.7px;top:984.02px;width:20.5px;height:20.5px;color:#6b7280" viewBox="0 0 24 24" fill="none" stroke="currentColor" stroke-width="2" stroke-linecap="round" stroke-linejoin="round"><path d="m6 14 1.5-2.9A2 2 0 0 1 9.24 10H20a2 2 0 0 1 1.94 2.5l-1.54 6a2 2 0 0 1-1.95 1.5H4a2 2 0 0 1-2-2V5a2 2 0 0 1 2-2h3.9a2 2 0 0 1 1.69.9l.81 1.2a2 2 0 0 0 1.67.9H18a2 2 0 0 1 2 2v2"/></svg><div class="t " style="left:977px;top:981.82px;font-size:22.8px;color:#6b7280;-webkit-text-stroke:0.15px #6b7280;">Company Documents/employee-handbook-2026.pdf</div><div class="b" style="left:947px;top:1036.12px;width:68px;height:68.0px;background:#f9fafb;border:1.5px solid #e6e8ec;border-radius:12px;"></div><svg class="ic" style="left:968.8px;top:1057.12px;width:30px;height:26px" viewBox="0 0 30 26" fill="none" stroke="#6b7280" stroke-width="1.9" stroke-linecap="round" stroke-linejoin="round"><path d="M4 10V2.5h11.5L20.5 7.5V10"/><path d="M15.5 2.5v5h5"/></svg><div class="t" style="left:960px;top:1070.62px;width:44px;text-align:center;font-size:10.8px;color:#6b7280;font-weight:bold;letter-spacing:0.1px">PDF</div><div class="t " style="left:1037px;top:1037.75px;font-size:25px;color:#0a0a0a;-webkit-text-stroke:0.35px #0a0a0a;letter-spacing:0.45px;">Employee Handbook 2026</div><div class="t " style="left:1037px;top:1074.03px;font-size:21.6px;color:#6b7280;-webkit-text-stroke:0.1px #6b7280;letter-spacing:0.12px;">Westbury Group Employee Handbook. Updated January 2026. This handbook outlines our policies, procedures, and expectations for all team</div><div class="t " style="left:1037px;top:1102.03px;font-size:21.6px;color:#6b7280;-webkit-text-stroke:0.1px #6b7280;letter-spacing:0.12px;">members. It covers topics including working hours, leave entitlem...</div><div class="t " style="left:1037px;top:1136.00px;font-size:16.2px;color:#6b7280;-webkit-text-stroke:0.1px #6b7280;">employee-handbook-2026.pdf<span style="margin-left:15px">2.3 MB</span></div><svg class="ic" style="left:944.7px;top:1185.26px;width:20.5px;height:20.5px;color:#6b7280" viewBox="0 0 24 24" fill="none" stroke="currentColor" stroke-width="2" stroke-linecap="round" stroke-linejoin="round"><path d="m6 14 1.5-2.9A2 2 0 0 1 9.24 10H20a2 2 0 0 1 1.94 2.5l-1.54 6a2 2 0 0 1-1.95 1.5H4a2 2 0 0 1-2-2V5a2 2 0 0 1 2-2h3.9a2 2 0 0 1 1.69.9l.81 1.2a2 2 0 0 0 1.67.9H18a2 2 0 0 1 2 2v2"/></svg><div class="t " style="left:977px;top:1183.06px;font-size:22.8px;color:#6b7280;-webkit-text-stroke:0.15px #6b7280;">Company Documents/brand-guidelines-v3.docx</div><div class="b" style="left:947px;top:1237.3600000000001px;width:68px;height:68.0px;background:#f9fafb;border:1.5px solid #e6e8ec;border-radius:12px;"></div><svg class="ic" style="left:968.5px;top:1259.8600000000001px;width:23.5px;height:23.5px;color:#6b7280" viewBox="0 0 24 24" fill="none" stroke="currentColor" stroke-width="1.7" stroke-linecap="round" stroke-linejoin="round"><rect x="6" y="3" width="15" height="18" rx="1.5"/><path d="M14 9h7M14 15h7"/><rect x="2" y="7.5" width="12" height="10" rx="1.5" fill="#f9fafb"/><path d="m5 10 1.3 5 1.7-4 1.7 4L11 10" stroke-width="1.6"/></svg><div class="t " style="left:1037px;top:1238.99px;font-size:25px;color:#0a0a0a;-webkit-text-stroke:0.35px #0a0a0a;letter-spacing:0.45px;">Brand Guidelines v3</div><div class="t " style="left:1037px;top:1275.27px;font-size:21.6px;color:#6b7280;-webkit-text-stroke:0.1px #6b7280;letter-spacing:0.12px;">Westbury Group Brand Guidelines. Version 3.0. Primary colours: Westbury Navy (#1B2A4A), Signal Green (#00C853). Typography: Inter for</div><div class="t " style="left:1037px;top:1303.27px;font-size:21.6px;color:#6b7280;-webkit-text-stroke:0.1px #6b7280;letter-spacing:0.12px;">digital, Freight Text for print. Logo clear space must be at least...</div><div class="t " style="left:1037px;top:1337.24px;font-size:16.2px;color:#6b7280;-webkit-text-stroke:0.1px #6b7280;">brand-guidelines-v3.docx<span style="margin-left:15px">825.2 KB</span></div><svg class="ic" style="left:944.7px;top:1386.4999999999998px;width:20.5px;height:20.5px;color:#6b7280" viewBox="0 0 24 24" fill="none" stroke="currentColor" stroke-width="2" stroke-linecap="round" stroke-linejoin="round"><path d="m6 14 1.5-2.9A2 2 0 0 1 9.24 10H20a2 2 0 0 1 1.94 2.5l-1.54 6a2 2 0 0 1-1.95 1.5H4a2 2 0 0 1-2-2V5a2 2 0 0 1 2-2h3.9a2 2 0 0 1 1.69.9l.81 1.2a2 2 0 0 0 1.67.9H18a2 2 0 0 1 2 2v2"/></svg><div class="t " style="left:977px;top:1384.30px;font-size:22.8px;color:#6b7280;-webkit-text-stroke:0.15px #6b7280;">Company Documents/onboarding-checklist.docx</div><div class="b" style="left:947px;top:1438.6px;width:68px;height:68.0px;background:#f9fafb;border:1.5px solid #e6e8ec;border-radius:12px;"></div><svg class="ic" style="left:968.5px;top:1461.1px;width:23.5px;height:23.5px;color:#6b7280" viewBox="0 0 24 24" fill="none" stroke="currentColor" stroke-width="1.7" stroke-linecap="round" stroke-linejoin="round"><rect x="6" y="3" width="15" height="18" rx="1.5"/><path d="M14 9h7M14 15h7"/><rect x="2" y="7.5" width="12" height="10" rx="1.5" fill="#f9fafb"/><path d="m5 10 1.3 5 1.7-4 1.7 4L11 10" stroke-width="1.6"/></svg><div class="t " style="left:1037px;top:1440.23px;font-size:25px;color:#0a0a0a;-webkit-text-stroke:0.35px #0a0a0a;letter-spacing:0.45px;">New Starter Onboarding Checklist</div><div class="t " style="left:1037px;top:1476.51px;font-size:21.6px;color:#6b7280;-webkit-text-stroke:0.1px #6b7280;letter-spacing:0.12px;">Onboarding Checklist for New Starters. Day 1: IT setup, building access, team introductions. Week 1: Shadow senior team member, complete</div></div></div>
</body></html>
